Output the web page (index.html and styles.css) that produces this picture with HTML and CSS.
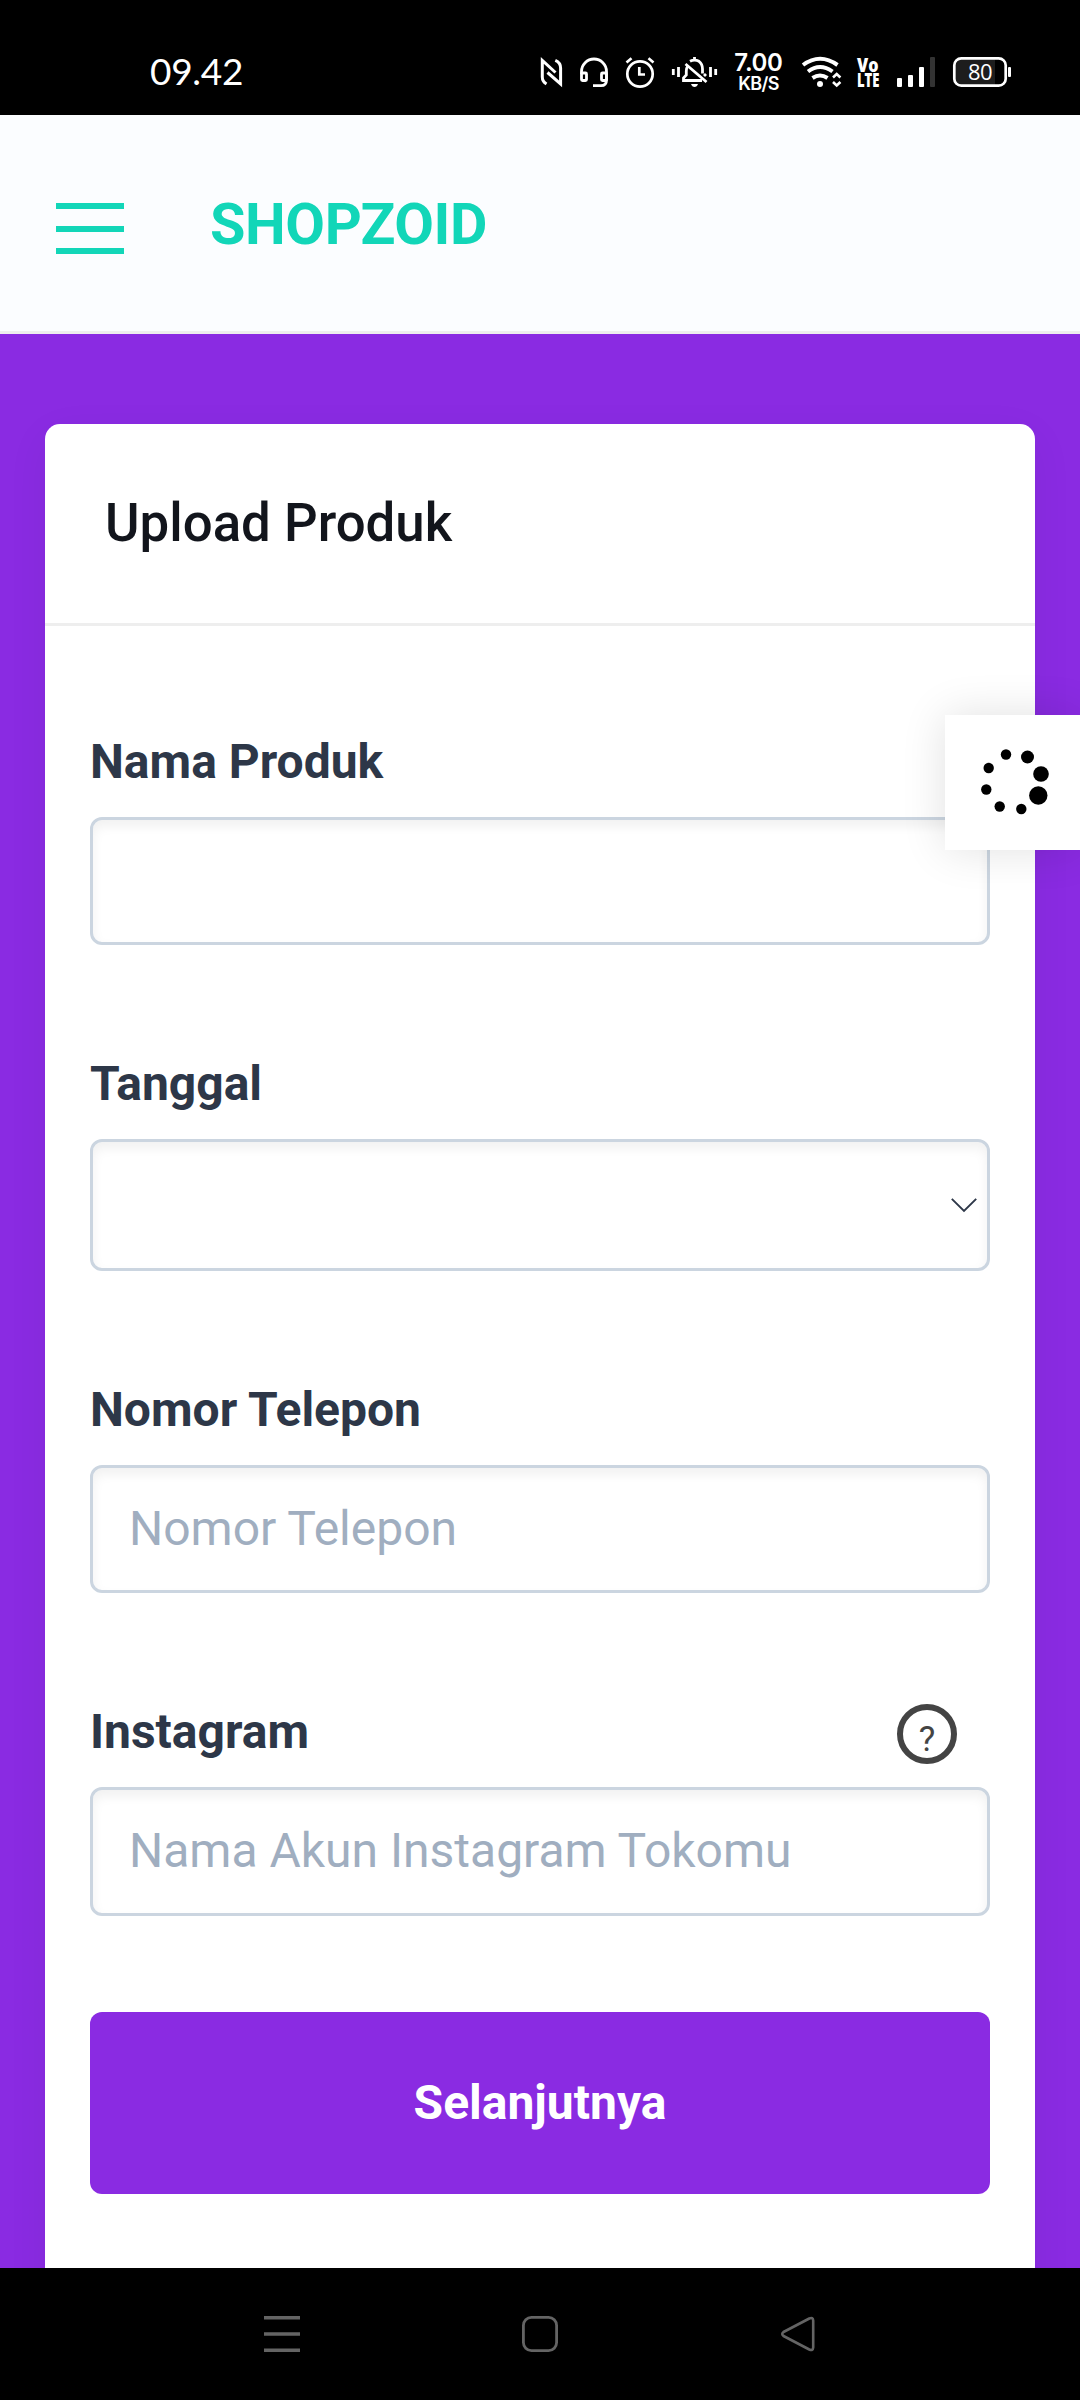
FILE: index.html
```html
<!DOCTYPE html>
<html lang="id">
<head>
<meta charset="utf-8">
<title>Shopzoid</title>
<link rel="stylesheet" href="styles.css">
</head>
<body>
<div class="statusbar">
  <span class="clock">09.42</span>
  <div class="status-icons">
    <svg width="24" height="36" viewBox="539 54 24 36" fill="none" stroke="#fff" stroke-width="3"><path d="M546.5 84 Q542.3 81.500 542.3 77 V60.500 L555.500 72.500 M555.300 60.300 Q560.600 62.500 560.600 68 V84 L547.500 72.500"/></svg>
    <svg width="30" height="36" viewBox="579 54 30 36" fill="none" stroke="#fff" stroke-width="2.800"><path d="M581.500 74 V71.500 A12.400 12.400 0 0 1 606.500 71.500 V80 Q606.500 85.700 601 85.700 H593"/><rect x="581.500" y="73" width="5" height="7.500" rx="1"/><rect x="601.500" y="73" width="5" height="7.500" rx="1"/></svg>
    <svg width="30" height="36" viewBox="625 54 30 36" fill="none" stroke="#fff" stroke-width="2.700"><circle cx="640" cy="74" r="12.700"/><path d="M639.300 67 V74.500 H645 M626.500 62.500 L631.500 58.300 M653.500 62.500 L648.500 58.300"/></svg>
    <svg width="46" height="36" viewBox="671 54 46 36" fill="none" stroke="#fff" stroke-width="2.800"><path d="M673.300 69 v6 M678.500 67 v10 M710.500 67 v10 M715.700 69 v6 M685.500 64 L706.500 82"/><path d="M687.500 66.500 Q686.300 68 686.300 71 V75 L683.500 78 V80.500 H702 M690 61.300 Q694.500 58.800 699 61.300 Q702.500 64 702.500 69 V73.500 M706 76 L704 74 M694.500 57 v3"/><path d="M691 84 h7 q-1 3 -3.500 3 t-3.500 -3z" fill="#fff" stroke="none"/></svg>
    <div class="net-speed"><span class="speed-value">7.00</span><span class="speed-unit">KB/S</span></div>
    <svg width="40" height="36" viewBox="801 54 40 36" fill="none" stroke="#fff" stroke-width="4"><path d="M803 65 Q820 52.500 837.500 65 M808 71.500 Q820 62.500 832.500 71.500 M812.500 78 Q820 73 827.500 78"/><circle cx="820" cy="84" r="3" fill="#fff" stroke="none"/><path d="M833 77.500 L836.700 74 L840.400 77.500 M833 82 L836.700 85.500 L840.400 82" stroke-width="2.600"/></svg>
    <svg class="volte" width="23" height="36" viewBox="857 54 23 36" fill="#fff"><text x="857" y="71.500" font-size="19" textLength="21.500" lengthAdjust="spacingAndGlyphs">Vo</text><text x="857" y="87" font-size="19" textLength="22.500" lengthAdjust="spacingAndGlyphs">LTE</text></svg>
    <svg width="40" height="36" viewBox="896 54 40 36" fill="#fff"><rect x="897" y="78" width="5" height="9" rx="1"/><rect x="908" y="75" width="5" height="12" rx="1"/><rect x="919" y="67" width="5" height="20" rx="1"/><rect x="930" y="57" width="5" height="30" rx="1" fill="#333"/></svg>
    <svg width="60" height="36" viewBox="952 54 60 36"><path d="M960 58.500 H995 V85.500 H960 Q955 85 955 80 V64 Q955 59 960 58.500z" fill="#1d1d1d"/><rect x="954.300" y="58.300" width="51.400" height="27.400" rx="7" fill="none" stroke="#fff" stroke-width="2.700"/><rect x="1008" y="67" width="3" height="10" rx="1" fill="#fff"/><text class="battery-level" x="980" y="79.700" font-size="22" text-anchor="middle" fill="#fff">80</text></svg>
  </div>
</div>

<header class="topbar">
  <div class="burger"><i></i><i></i><i></i></div>
  <h1 class="brand">SHOPZOID</h1>
</header>

<main class="page">
  <section class="card">
    <h2 class="card-title">Upload Produk</h2>
    <form class="form">
      <div class="field">
        <label class="label" for="nama">Nama Produk</label>
        <input class="input" id="nama" type="text">
      </div>
      <div class="field">
        <label class="label" for="tanggal">Tanggal</label>
        <div class="input date" id="tanggal"><svg width="28" height="16" viewBox="0 0 28 16" fill="none" stroke="#2d3748" stroke-width="1.900"><path d="M1.800 1.800 L14 14 L26.200 1.800"/></svg></div>
      </div>
      <div class="field">
        <label class="label" for="telepon">Nomor Telepon</label>
        <input class="input" id="telepon" type="text" placeholder="Nomor Telepon">
      </div>
      <div class="field">
        <div class="label-row"><label class="label" for="instagram">Instagram</label><span class="help">?</span></div>
        <input class="input input-tall" id="instagram" type="text" placeholder="Nama Akun Instagram Tokomu">
      </div>
      <button class="submit" type="button">Selanjutnya</button>
    </form>
  </section>
</main>

<nav class="navbar">
  <svg width="36" height="36" viewBox="0 0 36 36" stroke="#646464" stroke-width="3.400"><path d="M0 1.800H36M0 18H36M0 34.200H36"/></svg>
  <svg width="36" height="36" viewBox="0 0 36 36" fill="none" stroke="#646464" stroke-width="2.800"><rect x="1.400" y="1.400" width="33.200" height="33.200" rx="8"/></svg>
  <svg width="36" height="36" viewBox="0 0 36 36" fill="none" stroke="#646464" stroke-width="2.600" stroke-linejoin="round"><path d="M29.300 2.500 L3.500 16 Q1 18 3.500 20 L29.300 33.500 Q33 35 33.200 31.500 V4.500 Q33 1 29.300 2.500z"/></svg>
</nav>

<div class="loader">
  <svg width="135" height="135" viewBox="945 715 135 135"><circle cx="1006" cy="754.500" r="5.200"/><circle cx="1027.500" cy="757" r="6.500"/><circle cx="1041" cy="774" r="7.800"/><circle cx="1038.300" cy="795.500" r="9.200"/><circle cx="1021.300" cy="809" r="5.200"/><circle cx="999.700" cy="806.500" r="5.200"/><circle cx="986.300" cy="789.500" r="5.200"/><circle cx="988.700" cy="768" r="5.200"/></svg>
</div>
</body>
</html>
```
FILE: styles.css
```css
* {
  box-sizing: border-box;
  margin: 0;
  padding: 0;
}

body {
  position: relative;
  display: flex;
  flex-direction: column;
  width: 1080px;
  height: 2400px;
  overflow: hidden;
  font-family: Roboto, "Liberation Sans", sans-serif;
  background: #fff;
}

svg {
  display: block;
  flex: none;
  overflow: visible;
}

.statusbar {
  display: flex;
  flex: none;
  justify-content: space-between;
  height: 115px;
  padding: 54px 68px 0 150px;
  background: #000;
  color: #fff;
}

.clock {
  font: 400 37px/34px Lato, sans-serif;
  letter-spacing: -0.3px;
}

.status-icons {
  display: flex;
  gap: 16px;
}

.net-speed {
  display: flex;
  flex-direction: column;
  align-items: center;
  width: 51px;
  height: 36px;
  margin-right: 1px;
  font-family: Inter, sans-serif;
  font-weight: 600;
  white-space: nowrap;
}

.speed-value {
  font-size: 24px;
  line-height: 18px;
  letter-spacing: -0.3px;
}

.speed-unit {
  margin-top: 2px;
  font-size: 18px;
  line-height: 20px;
  letter-spacing: -0.6px;
}

.volte {
  font-family: "Open Sans", sans-serif;
  font-weight: 800;
}

.battery-level {
  font-family: "Open Sans", sans-serif;
  font-weight: 400;
  letter-spacing: -0.5px;
}

.topbar {
  display: flex;
  flex: none;
  align-items: flex-start;
  height: 219px;
  padding: 88px 56px 0;
  background: #fbfdff;
  border-bottom: 3px solid #eee;
}

.burger {
  display: flex;
  flex-direction: column;
  gap: 16.5px;
  width: 68px;
}

.burger i {
  height: 6px;
  background: #12d6b8;
}

.brand {
  margin: -11px 0 0 86px;
  color: #12d6b8;
  font-size: 57.6px;
  font-weight: 700;
  line-height: 66px;
  letter-spacing: -0.4px;
}

.page {
  flex: 1;
  padding: 90px 45px 0;
  overflow: hidden;
  background: #8a2be2;
}

.card {
  height: 1900px;
  background: #fff;
  border-radius: 15px;
  box-shadow: 0 12px 45px rgba(0, 0, 0, 0.05);
}

.card-title {
  height: 202px;
  padding: 0 60px;
  border-bottom: 3px solid #eee;
  color: #12151c;
  font-size: 52.8px;
  font-weight: 500;
  line-height: 198px;
}

.form {
  display: flex;
  flex-direction: column;
  gap: 103px;
  padding: 100px 45px 0;
}

.field {
  display: flex;
  flex-direction: column;
  gap: 19px;
}

.label {
  color: #2d3748;
  font-size: 48px;
  font-weight: 700;
  line-height: 72px;
}

.label-row {
  display: flex;
  align-items: center;
  justify-content: space-between;
  height: 72px;
  padding-right: 33px;
}

.help {
  width: 60px;
  height: 60px;
  margin-top: 4px;
  border: 6px solid #444;
  border-radius: 50%;
  color: #444;
  font-size: 35px;
  font-weight: 400;
  line-height: 60px;
  text-align: center;
}

.input {
  width: 100%;
  height: 128px;
  padding: 0 36px 2px;
  border: 3px solid #cbd5e0;
  border-radius: 12px;
  outline: 0;
  background: #fff;
  box-shadow: inset 0 6px 12px rgba(0, 0, 0, 0.06);
  font-family: inherit;
  font-size: 48px;
}

.input-tall {
  height: 129px;
  padding-bottom: 3px;
}

.input::placeholder {
  color: #a0aec0;
  opacity: 1;
}

.date {
  display: flex;
  align-items: center;
  justify-content: flex-end;
  height: 132px;
  padding: 0 9px 0 36px;
}

.submit {
  height: 182px;
  margin-top: -7px;
  padding-bottom: 2px;
  border: 0;
  border-radius: 12px;
  background: #8a2be2;
  color: #fff;
  font: inherit;
  font-size: 48px;
  font-weight: 700;
}

.navbar {
  display: flex;
  flex: none;
  align-items: center;
  justify-content: space-between;
  height: 132px;
  padding: 0 264px;
  background: #000;
}

.loader {
  position: absolute;
  top: 715px;
  right: 0;
  background: #fff;
  box-shadow: 0 0 45px rgba(0, 0, 0, 0.12);
}
```
